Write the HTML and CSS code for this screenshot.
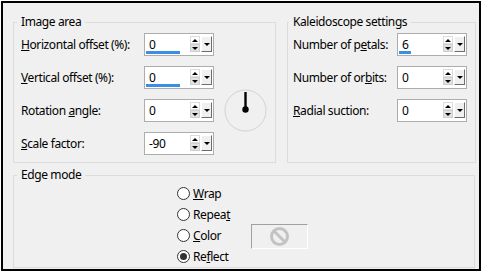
FILE: index.html
```html
<!DOCTYPE html>
<html lang="en">
<head>
  <meta charset="UTF-8">
  <title>Kaleidoscope</title>
  <link rel="stylesheet" href="styles.css">
</head>
<body>
  <div class="dialog">
    <div class="top-row">
      <!-- Image area -->
      <section class="group image-area">
        <div class="group-title">Image area</div>
        <div class="fields">
          <label class="field-label"><u>H</u>orizontal offset (%):</label>
          <div class="spin">
            <span class="spin-value">0<span class="spin-bar" style="width:34px"></span></span>
            <span class="spin-arrows"><span class="spin-up"></span><span class="spin-down"></span></span>
            <span class="spin-drop"></span>
          </div>

          <label class="field-label"><u>V</u>ertical offset (%):</label>
          <div class="spin">
            <span class="spin-value">0<span class="spin-bar" style="width:34px"></span></span>
            <span class="spin-arrows"><span class="spin-up"></span><span class="spin-down"></span></span>
            <span class="spin-drop"></span>
          </div>

          <label class="field-label">Rotation <u>a</u>ngle:</label>
          <div class="spin">
            <span class="spin-value">0</span>
            <span class="spin-arrows"><span class="spin-up"></span><span class="spin-down"></span></span>
            <span class="spin-drop"></span>
          </div>
          <div class="dial">
            <svg width="43" height="43" viewBox="0 0 43 43">
              <circle cx="21.5" cy="21.5" r="20.5" fill="none" stroke="#d2d2d2" stroke-width="1"/>
              <line x1="21.5" y1="3" x2="21.5" y2="20" stroke="#000" stroke-width="2.4"/>
              <circle cx="21.5" cy="20.5" r="3.2" fill="#000"/>
            </svg>
          </div>

          <label class="field-label"><u>S</u>cale factor:</label>
          <div class="spin">
            <span class="spin-value">-90</span>
            <span class="spin-arrows"><span class="spin-up"></span><span class="spin-down"></span></span>
            <span class="spin-drop"></span>
          </div>
        </div>
      </section>

      <!-- Kaleidoscope settings -->
      <section class="group kaleido">
        <div class="group-title">Kaleidoscope settings</div>
        <div class="fields">
          <label class="field-label">Number of p<u>e</u>tals:</label>
          <div class="spin">
            <span class="spin-value">6<span class="spin-bar" style="width:12px"></span></span>
            <span class="spin-arrows"><span class="spin-up"></span><span class="spin-down"></span></span>
            <span class="spin-drop"></span>
          </div>

          <label class="field-label">Number of or<u>b</u>its:</label>
          <div class="spin">
            <span class="spin-value">0</span>
            <span class="spin-arrows"><span class="spin-up"></span><span class="spin-down"></span></span>
            <span class="spin-drop"></span>
          </div>

          <label class="field-label"><u>R</u>adial suction:</label>
          <div class="spin">
            <span class="spin-value">0</span>
            <span class="spin-arrows"><span class="spin-up"></span><span class="spin-down"></span></span>
            <span class="spin-drop"></span>
          </div>
        </div>
      </section>
    </div>

    <!-- Edge mode -->
    <section class="group edge">
      <div class="group-title">Edge mode</div>
      <div class="edge-body">
        <div class="radios">
          <div class="radio"><span class="radio-mark"></span><span><u>W</u>rap</span></div>
          <div class="radio"><span class="radio-mark"></span><span>Repea<u>t</u></span></div>
          <div class="radio"><span class="radio-mark"></span><span><u>C</u>olor</span></div>
          <div class="radio checked"><span class="radio-mark"></span><span>Re<u>f</u>lect</span></div>
        </div>
        <div class="swatch">
          <svg width="21" height="21" viewBox="0 0 21 21">
            <circle cx="10.5" cy="10.5" r="8" fill="none" stroke="#c3c3c3" stroke-width="3"/>
            <line x1="5" y1="5" x2="16" y2="16" stroke="#c3c3c3" stroke-width="3"/>
          </svg>
        </div>
      </div>
    </section>
  </div>
</body>
</html>
```

FILE: styles.css
```css
/* Base */
body {
  margin: 0;
  background: #fff;
  font-family: "Noto Sans", sans-serif;
  font-size: 12px;
  letter-spacing: -0.4px;
  color: #000;
}

u {
  text-underline-offset: 1px;
}

/* Dialog frame */
.dialog {
  box-sizing: border-box;
  width: 480px;
  height: 270px;
  margin: 1px 0 0 1px;
  border: 2px solid #000;
  background: #f0f0f0;
  padding: 19px 3px 0 10px;
}

.top-row {
  display: flex;
  gap: 11px;
}

/* Group boxes */
.group {
  box-sizing: border-box;
  border: 1px solid #dcdcdc;
}

.group-title {
  width: fit-content;
  height: 16px;
  line-height: 16px;
  margin: -9px 0 0 -4px;
  padding: 0 4px;
  background: #f0f0f0;
}

.image-area {
  width: 263px;
  height: 141px;
  padding-left: 7px;
}

.kaleido {
  width: 189px;
  height: 141px;
  padding-left: 5px;
}

.edge {
  width: 462px;
  height: 93px;
  margin-top: 12px;
  padding-left: 7px;
}

/* Field grids */
.fields {
  display: grid;
  grid-auto-rows: 23px;
  row-gap: 10px;
  margin-top: 3px;
  align-items: center;
}

.image-area .fields {
  grid-template-columns: 123px 70px 1fr;
}

.image-area .spin {
  grid-column: 2;
}

.image-area .field-label {
  grid-column: 1;
}

.kaleido .fields {
  grid-template-columns: 104px 70px;
}

.field-label {
  line-height: 16px;
  white-space: nowrap;
}

/* Spin boxes */
.spin {
  box-sizing: border-box;
  height: 23px;
  display: flex;
  align-items: flex-start;
  border: 1px solid #adadad;
  background: #fff;
}

.spin-value {
  position: relative;
  flex: 1;
  height: 21px;
  line-height: 21px;
  padding-left: 4px;
}

.spin-bar {
  position: absolute;
  left: 1px;
  bottom: 1px;
  height: 3px;
  background: #3a8ee6;
}

.spin-arrows {
  display: flex;
  flex-direction: column;
  width: 10px;
  margin-top: 2px;
  margin-right: 1px;
}

.spin-up,
.spin-down {
  box-sizing: border-box;
  height: 8px;
  display: flex;
  align-items: center;
  justify-content: center;
  border: 1px solid #dcdcdc;
}

.spin-down {
  background: #e1e1e1;
  border-color: #cfcfcf;
}

.spin-up::after {
  content: "";
  border-left: 3px solid transparent;
  border-right: 3px solid transparent;
  border-bottom: 3px solid #000;
}

.spin-down::after,
.spin-drop::after {
  content: "";
  border-left: 3px solid transparent;
  border-right: 3px solid transparent;
  border-top: 3px solid #000;
}

.spin-drop {
  box-sizing: border-box;
  width: 11px;
  height: 16px;
  margin-top: 2px;
  margin-right: 1px;
  display: flex;
  align-items: center;
  justify-content: center;
  background: #f0f0f0;
  border: 1px solid;
  border-color: #fff #6d6d6d #6d6d6d #fff;
}

/* Angle dial */
.dial {
  grid-column: 3;
  grid-row: 3;
  justify-self: start;
  align-self: center;
  width: 43px;
  height: 43px;
  margin-left: 10px;
}

.dial svg {
  display: block;
}

/* Edge mode */
.edge-body {
  display: flex;
}

.radios {
  width: 74px;
  margin-left: 156px;
}

.radio {
  height: 21px;
  display: flex;
  align-items: center;
  gap: 3px;
}

.radio-mark {
  box-sizing: border-box;
  width: 13px;
  height: 13px;
  border: 1px solid #333;
  border-radius: 50%;
  background: #fff;
  display: flex;
  align-items: center;
  justify-content: center;
}

.radio.checked .radio-mark::after {
  content: "";
  width: 7px;
  height: 7px;
  border-radius: 50%;
  background: #333;
}

.swatch {
  box-sizing: border-box;
  width: 57px;
  height: 25px;
  margin-top: 41px;
  display: flex;
  align-items: center;
  justify-content: center;
  border: 1px solid;
  border-color: #a0a0a0 #fff #fff #a0a0a0;
  background: #f0f0f0;
}

.swatch svg {
  display: block;
}
```
